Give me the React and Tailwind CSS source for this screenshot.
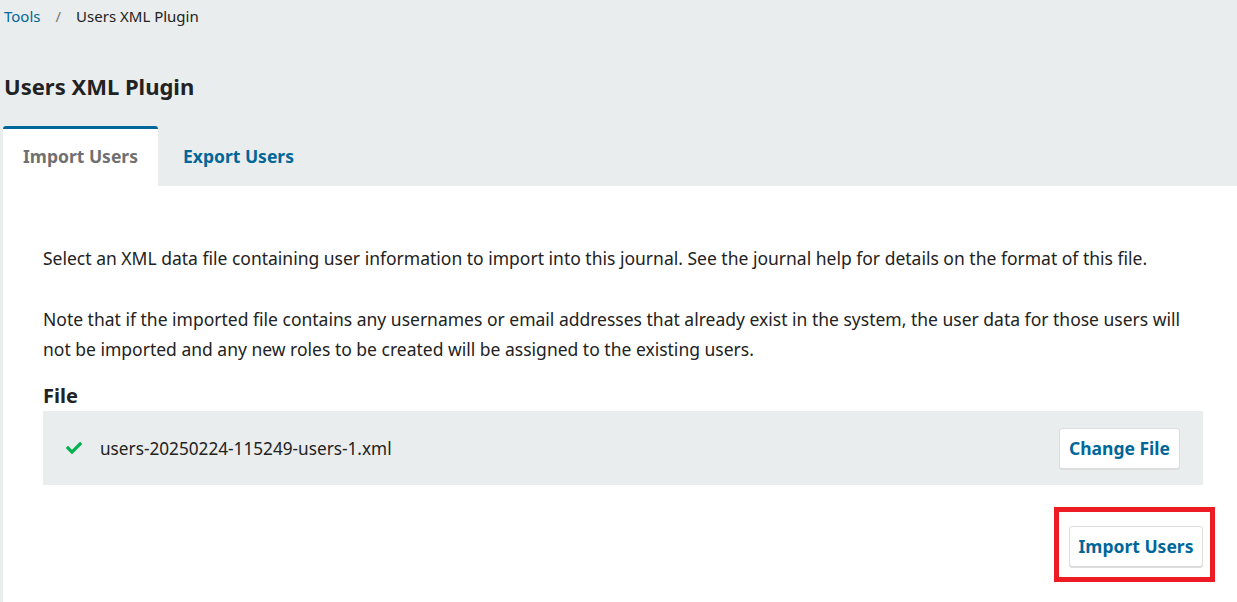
const font = { fontFamily: '"Noto Sans", sans-serif' };

function CheckMark() {
  return (
    <svg viewBox="0 0 512 512" className="w-[16px] h-[16px] text-[#00b24e]" fill="currentColor">
      <path d="M173.898 439.404l-166.4-166.4c-9.997-9.997-9.997-26.206 0-36.204l36.203-36.204c9.997-9.998 26.207-9.998 36.204 0L192 312.69 432.095 72.596c9.997-9.997 26.207-9.997 36.204 0l36.203 36.204c9.997 9.997 9.997 26.206 0 36.204l-294.4 294.401c-9.998 9.997-26.207 9.997-36.204-.001z" />
    </svg>
  );
}

export default function App() {
  return (
    <div
      className="min-h-screen flex flex-col bg-[#eaedee] text-[#222]"
      style={font}
    >
      <nav className="flex items-center h-[32px] pl-1 text-[15px] text-[#222]">
        <a className="text-[#006798]">Tools</a>
        <span className="mx-[15px] text-[#777]">/</span>
        <span>Users XML Plugin</span>
      </nav>

      <h1 className="pl-1 mt-[40px] text-[22px] leading-[28px] font-bold">Users XML Plugin</h1>

      <div className="flex mt-[26px] ml-[3px]">
        <div className="h-[60px] w-[155px] flex items-center justify-center pb-[3px] border-t-[3px] border-[#006798] bg-white rounded-t-[3px] text-[17.5px] font-bold text-[#707070]">
          Import Users
        </div>
        <div className="h-[60px] pl-[25px] pr-5 flex items-center text-[17.5px] font-bold text-[#006798]">
          Export Users
        </div>
      </div>

      <div className="flex-1 ml-[3px] bg-white pl-10 pr-[34px] pt-[57px] pb-8">
        <p className="text-[17.5px] leading-[30px]">
          Select an XML data file containing user information to import into this journal. See the journal help for details on the format of this file.
        </p>
        <p className="mt-[31px] text-[17.5px] leading-[30px]">
          Note that if the imported file contains any usernames or email addresses that already exist in the system, the user data for those users will not be imported and any new roles to be created will be assigned to the existing users.
        </p>

        <div className="mt-[19px] text-[20px] leading-[26px] font-bold">File</div>

        <div className="mt-[2px] h-[74px] flex items-center bg-[#eaedee] pl-[23px] pr-[23px]">
          <CheckMark />
          <span className="ml-[18px] pt-px text-[17.2px]">users-20250224-115249-users-1.xml</span>
          <button className="ml-auto h-[41px] px-[9px] bg-white border border-[#ddd] rounded-[3px] shadow-[0_1px_0_#ddd] text-[17.5px] font-bold text-[#006798]">
            Change File
          </button>
        </div>

        <div className="flex justify-end mt-[41px]">
          <div className="relative">
            <button className="h-[41px] w-[134px] bg-white border border-[#ddd] rounded-[3px] shadow-[0_1px_0_#ddd] text-[17.5px] font-bold text-[#006798]">
              Import Users
            </button>
            <div className="absolute -left-[15px] -top-[19px] -right-[12px] -bottom-[15px] border-[5px] border-[#ed1c24] pointer-events-none" />
          </div>
        </div>
      </div>
    </div>
  );
}
